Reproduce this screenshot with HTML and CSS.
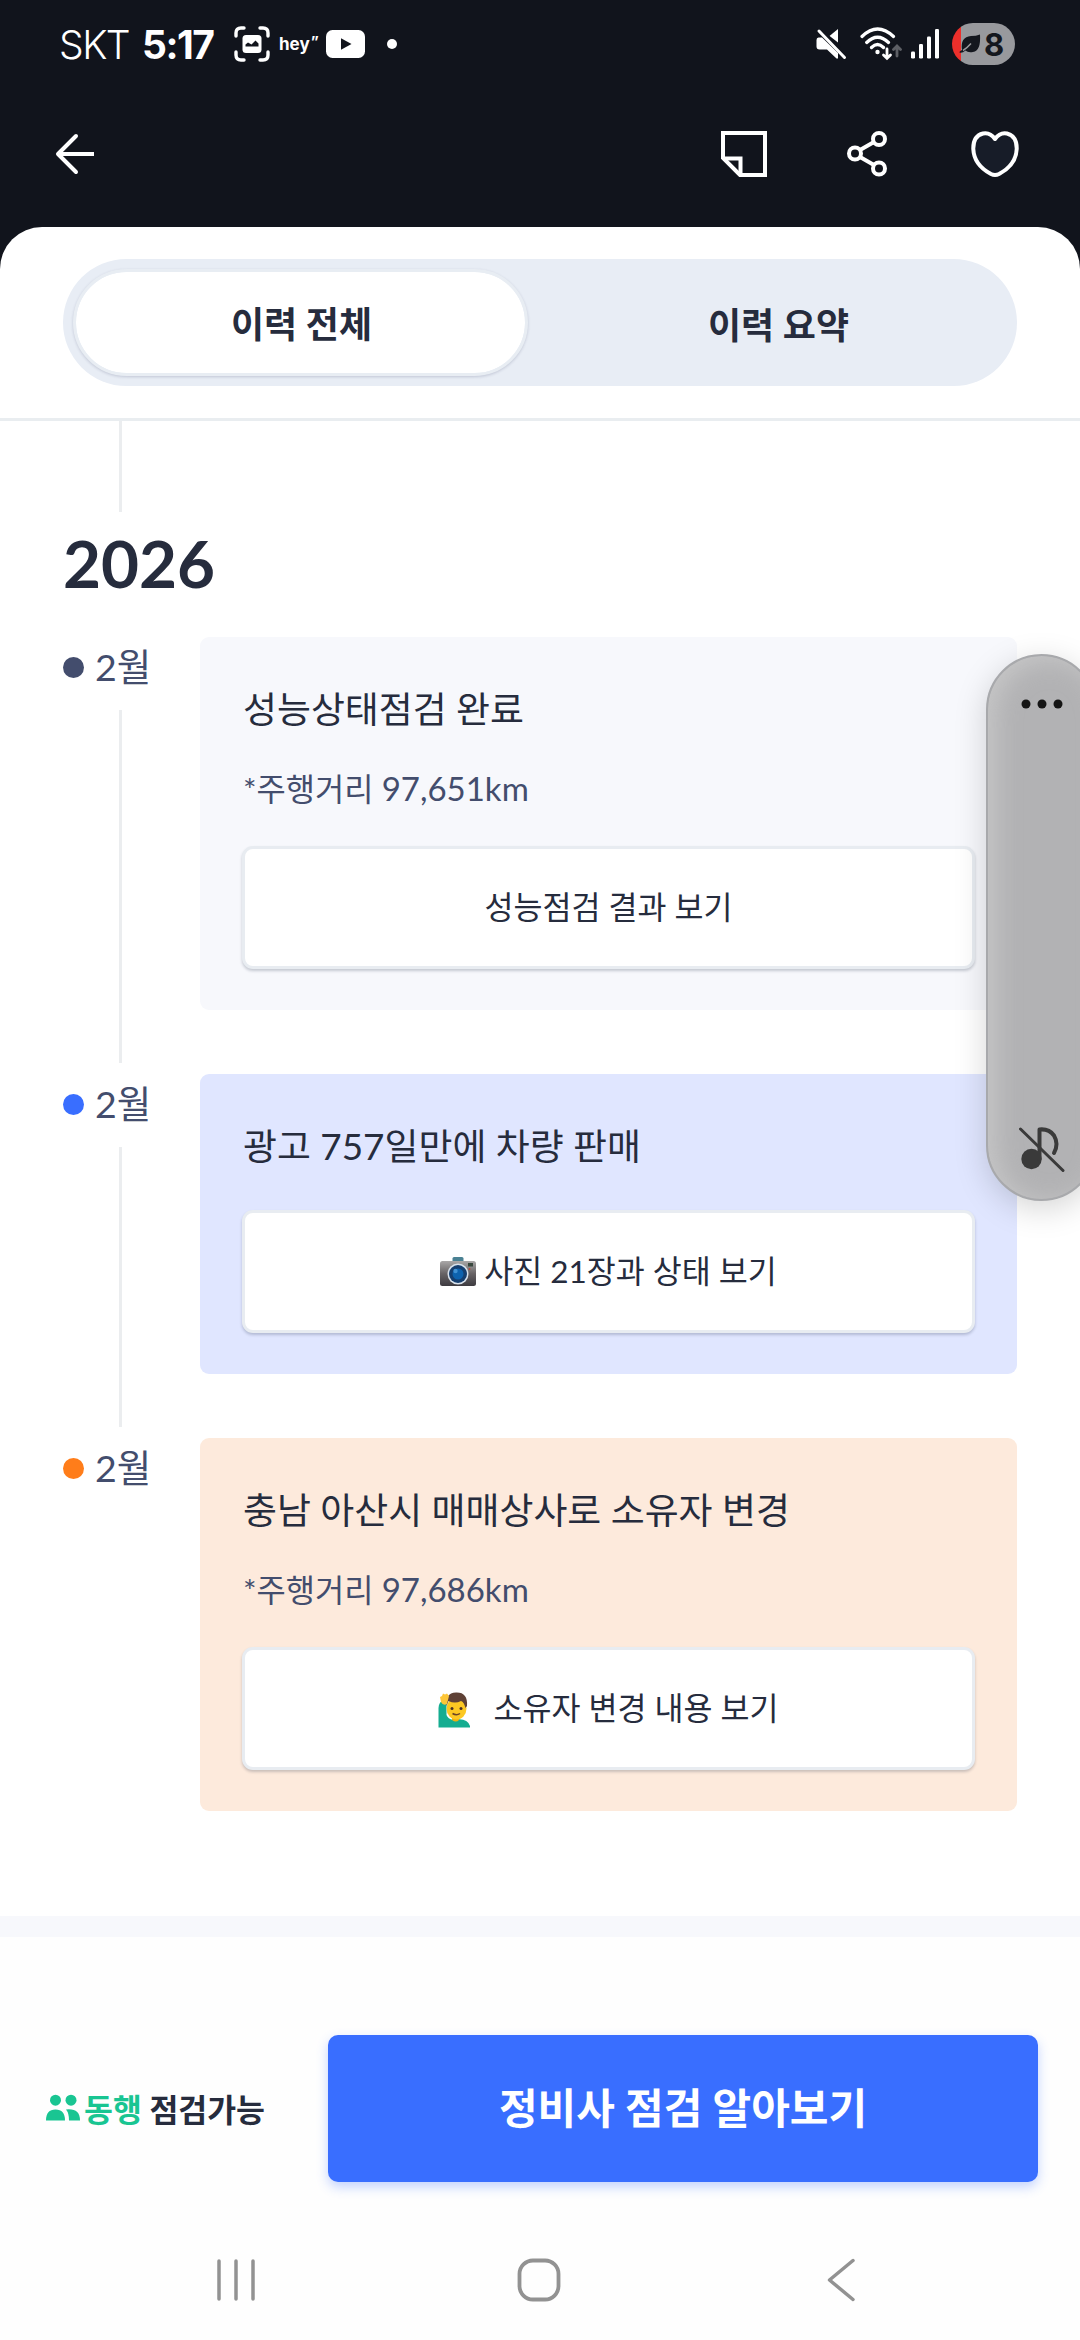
FILE: index.html
```html
<!DOCTYPE html>
<html lang="ko">
<head>
    <meta charset="UTF-8">
    <meta name="viewport" content="width=device-width, initial-scale=1.0">
    <title>이력 전체</title>
    <link rel="stylesheet" href="styles.css">
</head>
<body>
    <header class="top">
        <div class="status-bar">
            <span class="carrier">SKT</span>
            <span class="clock">5:17</span>
            <svg class="capture-icon" width="36" height="36" viewBox="0 0 36 36" fill="none">
                <path d="M2 10V7Q2 2 7 2H10M26 2H29Q34 2 34 7V10M34 26V29Q34 34 29 34H26M10 34H7Q2 34 2 29V26" stroke="#fff" stroke-width="3.4" stroke-linecap="round"/>
                <rect x="8.5" y="9" width="19" height="18" rx="3.5" fill="#fff"/>
                <path d="M11.500 20.500V18.500L14 16.500L17.500 18.500L21.500 14.500L24.500 17.500V20.500Z" fill="#11141c"/>
            </svg>
            <span class="hey">hey<sup>”</sup></span>
            <svg class="video-icon" width="39" height="28" viewBox="0 0 39 28">
                <rect width="39" height="28" rx="6.5" fill="#fff"/>
                <path d="M15 8.2L25.5 14L15 19.8Z" fill="#11141c"/>
            </svg>
            <span class="more-dot"></span>

            <div class="status-right">
                <svg width="31" height="32" viewBox="0 0 31 32">
                    <path d="M2.5 9.5H6L22 25V30.5H20.5L11 21.5H3.5Q0.5 21.5 0.5 18.5V12Q0.5 9.5 2.5 9.5Z" fill="#fff"/>
                    <path d="M13.5 8L22 1V14.5Z" fill="#fff"/>
                    <path d="M8 4L24 20" stroke="#11141c" stroke-width="2"/>
                    <path d="M3 3L28.5 29.5" stroke="#fff" stroke-width="3" stroke-linecap="round"/>
                </svg>
                <svg class="wifi-icon" width="42" height="34" viewBox="0 0 42 34" fill="none" stroke="#fff" stroke-width="3.2" stroke-linecap="round">
                    <path d="M2 9.5Q17.500 -5.500 33.500 9.500M6.700 15.500Q17.500 5 28.500 15.500M11.500 20.500Q17.500 14.500 23.500 20.500"/>
                    <circle cx="17.500" cy="25" r="2.200" fill="#fff" stroke="none"/>
                    <path d="M27 22V30M23.500 28L27 31.300L30.500 28" stroke-width="2.800"/>
                    <path d="M37 29V20M33.500 22.500L37 19L40.500 22.500" stroke="#5d5f65" stroke-width="2.800"/>
                </svg>
                <svg class="signal-icon" width="29" height="30" viewBox="0 0 29 30" fill="#fff">
                    <rect x="0" y="22.500" width="4" height="7" rx="1.200"/>
                    <rect x="8" y="15" width="4" height="14.500" rx="1.200"/>
                    <rect x="16" y="7.500" width="4" height="22" rx="1.200"/>
                    <rect x="24" y="0" width="4" height="29.500" rx="1.200"/>
                </svg>
                <div class="battery">
                    <svg width="22" height="20" viewBox="0 0 22 20">
                        <path d="M21 0.500Q22 17 14 18Q9 19 6.500 16.500Q3 19.500 0.500 18.500Q0 17.500 3 16Q1 3 12 2Q17 2 21 0.500Z" fill="#14171e"/>
                        <path d="M4 16.500Q8 14 12 9.500" stroke="#98999d" stroke-width="1.500" fill="none"/>
                    </svg>
                    <span>8</span>
                </div>
            </div>
        </div>

        <nav class="nav-bar">
            <svg width="42" height="44" viewBox="0 0 42 44" fill="none" stroke="#fff" stroke-width="4" stroke-linecap="round" stroke-linejoin="round">
                <path d="M22 4L4 22L22 40"/>
                <path d="M5 22H40" stroke-linecap="butt"/>
            </svg>
            <div class="nav-icons">
                <svg width="48" height="48" viewBox="0 0 48 48" fill="none" stroke="#fff" stroke-width="4">
                    <path d="M3 3H45V45H20L3 28Z"/>
                    <path d="M3 28.500H20.500V45"/>
                </svg>
                <svg class="share-icon" width="42" height="48" viewBox="0 0 42 48" fill="none" stroke="#fff" stroke-width="4">
                    <circle cx="33" cy="9" r="6"/>
                    <circle cx="9" cy="23.500" r="6"/>
                    <circle cx="33" cy="38.500" r="6"/>
                    <path d="M14 20L28 12M14 27L28 35"/>
                </svg>
                <svg width="50" height="48" viewBox="0 0 50 48" fill="#171c28" stroke="#fff" stroke-width="4" stroke-linejoin="round">
                    <path d="M25 9Q20 2 13 3.500Q3 6 3.300 19Q4 35 21 44Q25 46 29 44Q46 35 46.700 19Q47 6 37 3.500Q30 2 25 9Z"/>
                </svg>
            </div>
        </nav>
    </header>

    <main class="sheet">
        <div class="tabs-wrap">
            <div class="tabs">
                <button class="tab active">이력 전체</button>
                <button class="tab">이력 요약</button>
            </div>
        </div>

        <section class="history">
            <div class="year-line"></div>
            <h2 class="year">2026</h2>

            <div class="event">
                <div class="month-col">
                    <div class="month"><span class="dot"></span>2월</div>
                    <div class="line"></div>
                </div>
                <div class="card">
                    <p class="card-title">성능상태점검 완료</p>
                    <p class="mileage">*주행거리 <span class="km">97,651km</span></p>
                    <button class="card-button">성능점검 결과 보기</button>
                </div>
            </div>

            <div class="event">
                <div class="month-col">
                    <div class="month"><span class="dot blue"></span>2월</div>
                    <div class="line"></div>
                </div>
                <div class="card card-blue">
                    <p class="card-title">광고 757일만에 차량 판매</p>
                    <button class="card-button">
                        <svg class="camera" width="36" height="30" viewBox="0 0 36 30">
                            <defs>
                                <linearGradient id="cameraBody" x1="0" y1="0" x2="0" y2="1">
                                    <stop offset="0" stop-color="#aaa8a8"/>
                                    <stop offset="0.500" stop-color="#686466"/>
                                    <stop offset="1" stop-color="#3d3b40"/>
                                </linearGradient>
                            </defs>
                            <rect x="12.500" y="0" width="11" height="6" rx="1.500" fill="#4a8193"/>
                            <rect x="0" y="4" width="36" height="25" rx="2.500" fill="url(#cameraBody)"/>
                            <rect x="28" y="6" width="5" height="3.500" fill="#39483e"/>
                            <circle cx="29.500" cy="12" r="1" fill="#b94a3c"/>
                            <circle cx="18" cy="17" r="10.500" fill="#d8e2ec"/>
                            <circle cx="18" cy="17" r="9" fill="#153f70"/>
                            <circle cx="18" cy="17" r="5.500" fill="#0d62ae"/>
                            <circle cx="15.500" cy="14" r="2.200" fill="#3f91d4"/>
                        </svg>
                        <span>사진 21장과 상태 보기</span>
                    </button>
                </div>
            </div>

            <div class="event">
                <div class="month-col">
                    <div class="month"><span class="dot orange"></span>2월</div>
                </div>
                <div class="card card-orange">
                    <p class="card-title">충남 아산시 매매상사로 소유자 변경</p>
                    <p class="mileage">*주행거리 <span class="km">97,686km</span></p>
                    <button class="card-button">
                        <svg class="person" width="33" height="36" viewBox="0 0 33 36">
                            <path d="M0.500 35.500V16Q1 10 4 9.500L8.500 12V23Q10 27 15 28Q29 25 32 34V35.500Z" fill="#15ad91"/>
                            <path d="M14 23H21V28Q18 31 14 28Z" fill="#efb10e"/>
                            <ellipse cx="18.500" cy="16.500" rx="10" ry="11" fill="#fcc823"/>
                            <path d="M8.500 14Q6.500 1 18 0.500Q30 0 29 14L27.500 16Q26 10 23 9Q17 12 10.500 9Z" fill="#5f4136"/>
                            <circle cx="14" cy="16.500" r="1.500" fill="#493127"/>
                            <circle cx="23" cy="16.500" r="1.500" fill="#493127"/>
                            <path d="M14.500 21.500Q18.500 24 22 21.500" stroke="#6c4426" stroke-width="1.500" fill="none"/>
                            <path d="M3 10L2 5L4 4L5 1.500L7 2.500L9 1.500L11 4L9 12Q5 14 3 10Z" fill="#fdc638"/>
                        </svg>
                        <span>소유자 변경 내용 보기</span>
                    </button>
                </div>
            </div>
        </section>
    </main>

    <footer class="bottom">
        <div class="inspect">
            <svg width="34" height="28" viewBox="0 0 34 28" fill="#19c592">
                <circle cx="9.500" cy="6.200" r="5.500"/>
                <circle cx="25" cy="6.200" r="5.500"/>
                <path d="M0 26.500Q0 15.500 9.500 15.500Q19 15.500 19 26.500Z"/>
                <path d="M20 15.500Q34 14 34 26.500H23Q23 19 20 15.500Z"/>
            </svg>
            <span><em>동행</em> 점검가능</span>
        </div>
        <button class="inspect-button">정비사 점검 알아보기</button>
    </footer>

    <div class="system-nav">
        <svg width="42" height="44" viewBox="0 0 42 44" stroke="#929292" stroke-width="3.500" stroke-linecap="round">
            <path d="M3 3V41M20 3V41M37 3V41"/>
        </svg>
        <svg class="home" width="44" height="44" viewBox="0 0 44 44" fill="none" stroke="#929292" stroke-width="3.800">
            <rect x="2.500" y="2.500" width="39" height="39" rx="13.500"/>
        </svg>
        <svg width="30" height="44" viewBox="0 0 30 44" fill="none" stroke="#929292" stroke-width="3.500" stroke-linecap="round" stroke-linejoin="round">
            <path d="M27 2.500L3.500 22L27 41.500"/>
        </svg>
    </div>

    <aside class="volume">
        <svg width="42" height="10" viewBox="0 0 42 10" fill="#151515">
            <circle cx="5" cy="5" r="4.500"/>
            <circle cx="21" cy="5" r="4.500"/>
            <circle cx="37" cy="5" r="4.500"/>
        </svg>
        <svg width="46" height="47" viewBox="0 0 46 47" fill="none" stroke="#3a3a3a">
            <circle cx="12.500" cy="33" r="10.200" fill="#3a3a3a" stroke="none"/>
            <path d="M20.500 33V3.500Q30 2.500 35 9.500Q40 18 35 27" stroke-width="4" stroke-linecap="round" stroke-linejoin="round"/>
            <path d="M1.500 3L44 44.500" stroke-width="3" stroke-linecap="round"/>
        </svg>
    </aside>
</body>
</html>
```

FILE: styles.css
```css
* {
    box-sizing: border-box;
}

body {
    margin: 0;
    width: 1080px;
    height: 2340px;
    position: relative;
    overflow: hidden;
    display: flex;
    flex-direction: column;
    background-color: #11141c;
    color: #262c3d;
    font-family: Lato, "Noto Sans CJK KR", sans-serif;
}

p, h2 {
    margin: 0;
}

svg {
    display: block;
    flex-shrink: 0;
}

button {
    font-family: inherit;
    color: inherit;
    border: none;
    padding: 0;
}

/* top */
.top {
    height: 227px;
    flex-shrink: 0;
    color: #fff;
}

.status-bar {
    height: 88px;
    padding: 0 65px 0 59px;
    display: flex;
    align-items: center;
}

.carrier {
    width: 83px;
    font-family: Inter, sans-serif;
    font-size: 39px;
    font-weight: 300;
    letter-spacing: -1.5px;
}

.clock {
    width: 92px;
    font-family: Inter, sans-serif;
    font-size: 39px;
    font-weight: 700;
    letter-spacing: -1.5px;
}

.hey {
    width: 47px;
    margin-left: 9px;
    font-family: Inter, sans-serif;
    font-size: 17px;
    line-height: 20px;
    font-weight: 700;
    white-space: nowrap;
}

.hey sup {
    margin-left: 1px;
    font-size: 15px;
    line-height: 0;
    vertical-align: 3px;
}

.more-dot {
    width: 10px;
    height: 10px;
    margin-left: 22px;
    border-radius: 50%;
    background-color: #fff;
}

.status-right {
    margin-left: auto;
    display: flex;
    align-items: center;
}

.wifi-icon {
    margin-left: 13px;
}

.signal-icon {
    margin-left: 9px;
}

.battery {
    width: 63px;
    height: 42px;
    margin-left: 12px;
    padding-left: 7px;
    border-radius: 21px;
    display: flex;
    align-items: center;
    gap: 3px;
    background: linear-gradient(to right, #ed2f2b 9px, #98999d 9px);
    color: #14171e;
    font-family: Inter, sans-serif;
    font-size: 31px;
    font-weight: 700;
}

.nav-bar {
    height: 132px;
    padding: 0 60px 0 54px;
    display: flex;
    align-items: center;
    justify-content: space-between;
}

.nav-icons {
    display: flex;
    align-items: center;
}

.share-icon {
    margin: 0 82px 0 78px;
}

/* history */
.sheet {
    height: 1710px;
    flex-shrink: 0;
    border-radius: 42px 42px 0 0;
    border-bottom: 21px solid #f7f8fc;
    background-color: #fff;
}

.tabs-wrap {
    height: 194px;
    padding: 32px 63px 0;
    border-bottom: 3px solid #e9edf0;
}

.tabs {
    height: 127px;
    padding: 10px;
    border-radius: 64px;
    display: flex;
    background-color: #e8edf5;
}

.tab {
    flex: 1;
    padding-left: 22px;
    border-radius: 54px;
    background: none;
    font-size: 36px;
    font-weight: 700;
}

.tab.active {
    flex: none;
    width: 455px;
    padding: 0 0 1px 2px;
    border: 3px solid #e8edf3;
    background-color: #fff;
    background-clip: padding-box;
    box-shadow: 0 1px 3px rgba(38, 44, 90, 0.2);
}

.history {
    padding: 0 63px;
}

.year-line {
    width: 3px;
    height: 91px;
    margin-left: 56px;
    background-color: #ebedef;
}

.year {
    height: 125px;
    font-size: 65.5px;
    line-height: 101px;
    font-weight: 700;
}

.event {
    display: flex;
    margin-bottom: 64px;
}

.month-col {
    width: 137px;
    display: flex;
    flex-direction: column;
}

.month {
    height: 62px;
    display: flex;
    align-items: center;
    gap: 11px;
    padding-bottom: 2px;
    color: #434d6d;
    font-size: 37.5px;
    line-height: 60px;
}

.dot {
    width: 21px;
    height: 21px;
    border-radius: 50%;
    background-color: #434d6d;
}

.dot.blue {
    background-color: #396eff;
}

.dot.orange {
    background-color: #ff7d1a;
}

.line {
    width: 3px;
    flex: 1;
    margin: 11px 0 -53px 56px;
    background-color: #ebedef;
}

.card {
    width: 817px;
    padding: 41px 42px;
    border-radius: 9px;
    background-color: #f7f8fc;
}

.card-blue {
    background-color: #e0e6ff;
}

.card-orange {
    background-color: #fdeadc;
}

.card-title {
    height: 63px;
    margin-bottom: 32px;
    padding-left: 1px;
    font-size: 36.9px;
    line-height: 63px;
}

.mileage {
    height: 42px;
    margin: -6px 0 37px;
    padding-left: 1px;
    color: #434d6d;
    font-size: 31.8px;
    line-height: 42px;
}

.km {
    font-size: 33px;
}

.card-button {
    width: 100%;
    height: 123px;
    padding-bottom: 5px;
    border: 3px solid #e8ecf1;
    border-radius: 11px;
    display: flex;
    align-items: center;
    justify-content: center;
    background-color: #fff;
    box-shadow: 0 2px 3px rgba(20, 30, 60, 0.22);
    font-size: 31.5px;
}

.camera {
    margin: 5px 8px 0 0;
}

.person {
    margin: 7px 22px 0 0;
}

/* bottom */
.bottom {
    height: 279px;
    flex-shrink: 0;
    padding: 98px 42px 0 46px;
    display: flex;
    justify-content: space-between;
    background-color: #fefefe;
}

.inspect {
    height: 147px;
    padding-bottom: 1px;
    display: flex;
    align-items: center;
    gap: 4px;
    font-size: 31.4px;
    font-weight: 700;
}

.inspect em {
    color: #19c592;
    font-style: normal;
}

.inspect-button {
    width: 710px;
    height: 147px;
    padding-bottom: 7px;
    border-radius: 10px;
    background-color: #396eff;
    box-shadow: 0 5px 12px rgba(57, 110, 255, 0.3);
    color: #fff;
    font-size: 42px;
    font-weight: 700;
}

.system-nav {
    flex: 1;
    padding: 42px 224px 0 216px;
    display: flex;
    justify-content: space-between;
    background-color: #fefefe;
}

.home {
    margin-right: 7px;
}

/* floating volume panel, partly off the right edge */
.volume {
    position: absolute;
    top: 654px;
    left: 986px;
    width: 111px;
    height: 547px;
    padding: 43px 0 26px;
    border: 2px solid #a8a9ac;
    border-radius: 56px;
    display: flex;
    flex-direction: column;
    align-items: center;
    justify-content: space-between;
    background-color: #b2b2b4;
    box-shadow: inset 8px 4px 26px rgba(205, 205, 205, 0.75), 0 8px 32px rgba(0, 0, 0, 0.17);
}
```
